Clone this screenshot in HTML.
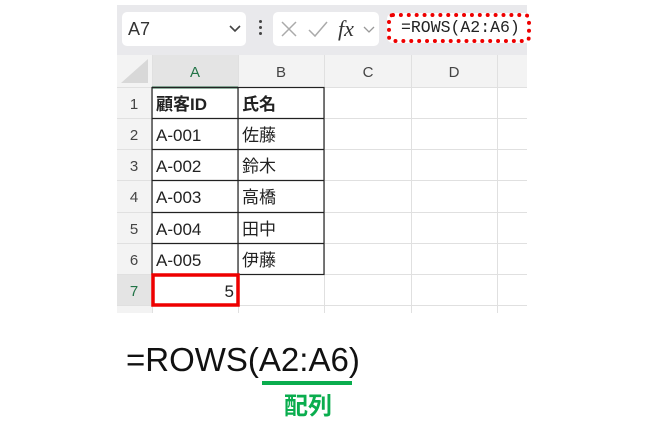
<!DOCTYPE html>
<html><head><meta charset="utf-8"><style>
body{margin:0;width:650px;height:426px;background:#fff;position:relative;overflow:hidden;font-family:"Liberation Sans","Noto Sans CJK JP",sans-serif}
.a{position:absolute}
.t{font-size:17px;color:#222;line-height:1}
</style></head><body>
<div class="a" style="left:117px;top:5px;width:410px;height:308px;background:#e9e9ec"></div>
<div class="a" style="left:122px;top:12px;width:124px;height:34px;background:#fff;border-radius:5px"></div>
<div class="a t" style="left:128px;top:20px;color:#333;font-size:18px">A7</div>
<svg class="a" style="left:229px;top:25px" width="12" height="8"><path d="M1 1 L6 6 L11 1" stroke="#444" stroke-width="1.6" fill="none"/></svg>
<div class="a" style="left:259px;top:20px;width:3px;height:3px;background:#444;border-radius:2px"></div>
<div class="a" style="left:259px;top:26px;width:3px;height:3px;background:#444;border-radius:2px"></div>
<div class="a" style="left:259px;top:32px;width:3px;height:3px;background:#444;border-radius:2px"></div>
<div class="a" style="left:273px;top:12px;width:106px;height:34px;background:#fff;border-radius:5px"></div>
<svg class="a" style="left:280px;top:18px" width="100" height="24"><path d="M2 4 L16 18 M16 4 L2 18" stroke="#aaa" stroke-width="1.5"/><path d="M29 12 L35 18 L47 4" stroke="#aaa" stroke-width="1.5" fill="none"/><text x="58" y="18" font-family="Liberation Serif" font-style="italic" font-size="22" fill="#333">fx</text><path d="M84 9 L89 14 L94 9" stroke="#999" stroke-width="1.3" fill="none"/></svg>
<div class="a" style="left:387px;top:13px;width:144px;height:30px;background:#fff;border:4px dotted #e00;border-radius:6px;box-sizing:border-box"></div>
<div class="a t" style="left:401px;top:20px;font-family:'Liberation Mono',monospace;font-size:16.5px;color:#222">=ROWS(A2:A6)</div>
<svg class="a" style="left:117px;top:55px" width="410" height="258">
<rect x="0" y="0" width="410" height="258" fill="#fff"/>
<rect x="0" y="0" width="410" height="32" fill="#f3f3f3"/>
<rect x="0" y="0" width="35" height="258" fill="#f3f3f3"/>
<rect x="35" y="0" width="86" height="32" fill="#e4e4e4"/>
<rect x="0" y="219" width="35" height="31" fill="#e4e4e4"/>
<path d="M4 28 L31 28 L31 4 Z" fill="#d8d8d8"/>
<g stroke="#e0e0e0" stroke-width="1">
<path d="M35.5 0V258 M121.5 0V258 M207.5 0V258 M294.5 0V258 M380.5 0V258"/>
<path d="M0 32.5H410 M0 63.5H410 M0 94.5H410 M0 125.5H410 M0 157.5H410 M0 188.5H410 M0 219.5H410 M0 250.5H410"/>
</g>
<path d="M35 32.5H121" stroke="#217346" stroke-width="2"/>
<g stroke="#222" stroke-width="1.2" fill="none">
<rect x="35" y="32.5" width="172" height="187"/>
<path d="M121 32.5V219.5 M35 63.5H207 M35 94.5H207 M35 125.5H207 M35 157.5H207 M35 188.5H207"/>
</g>
<rect x="36" y="220" width="85" height="30" fill="none" stroke="#e00" stroke-width="3.5"/>
<g font-size="15" fill="#444" text-anchor="middle" font-family="Liberation Sans">
<text x="78" y="22" fill="#217346">A</text><text x="164" y="22">B</text><text x="251" y="22">C</text><text x="337" y="22">D</text>
<text x="17" y="54">1</text><text x="17" y="85">2</text><text x="17" y="116">3</text><text x="17" y="147">4</text><text x="17" y="179">5</text><text x="17" y="210">6</text><text x="17" y="241" fill="#217346">7</text>
</g>
<g font-size="17" fill="#222" font-family="Liberation Sans,Noto Sans CJK JP,sans-serif">
<text x="39" y="55" font-weight="bold">顧客ID</text><text x="125" y="55" font-weight="bold">氏名</text>
<text x="39" y="86">A-001</text><text x="125" y="86">佐藤</text>
<text x="39" y="117">A-002</text><text x="125" y="117">鈴木</text>
<text x="39" y="148">A-003</text><text x="125" y="148">高橋</text>
<text x="39" y="180">A-004</text><text x="125" y="180">田中</text>
<text x="39" y="211">A-005</text><text x="125" y="211">伊藤</text>
<text x="117" y="242" text-anchor="end">5</text>
</g>
</svg>
<div class="a" style="left:126px;top:343px;font-size:33px;color:#111;line-height:1">=ROWS(A2:A6)</div>
<div class="a" style="left:262px;top:381px;width:90px;height:4px;background:#0aad4e"></div>
<div class="a" style="left:284px;top:392px;font-size:24px;font-weight:bold;color:#0aad4e;line-height:1;font-family:'Noto Sans CJK JP',sans-serif">配列</div>
</body></html>
